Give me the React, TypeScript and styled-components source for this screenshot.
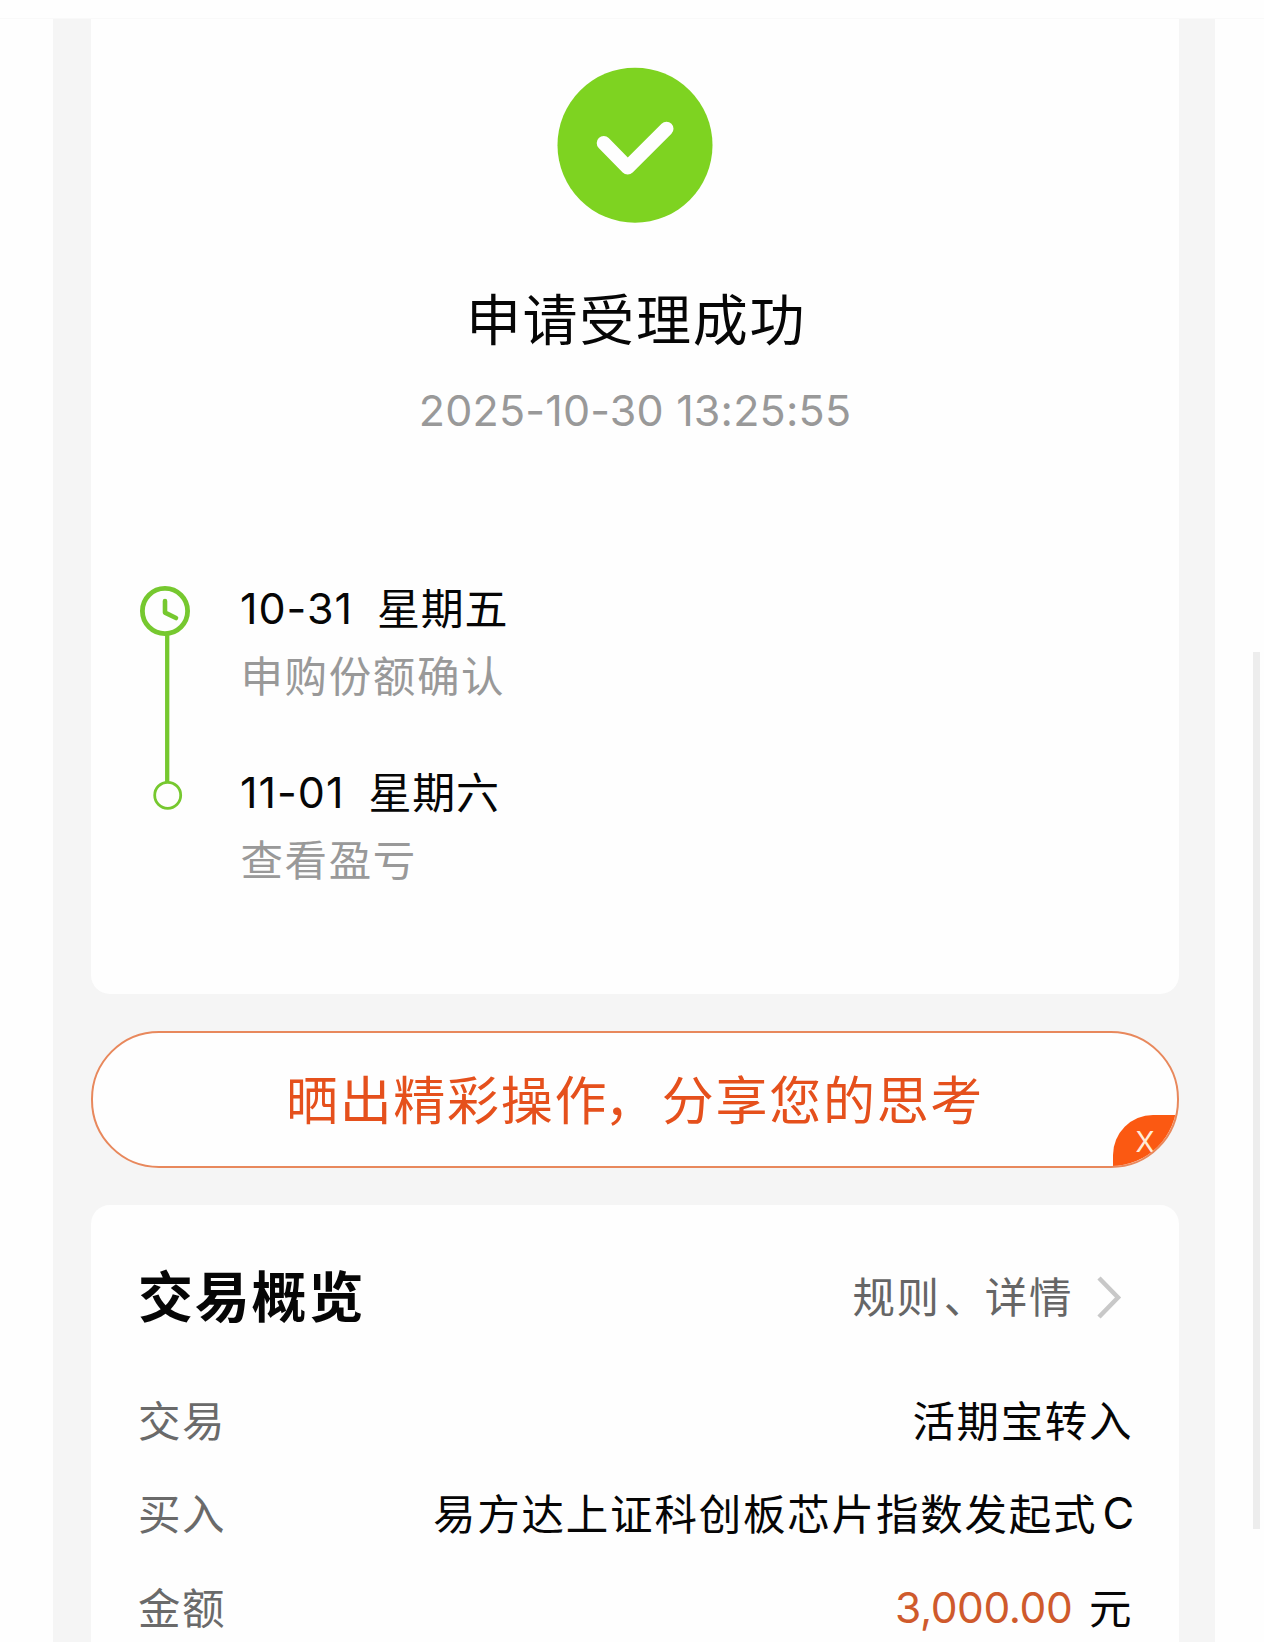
import React from "react";
import styled, { createGlobalStyle } from "styled-components";

const GlobalStyle = createGlobalStyle`
  * { box-sizing: border-box; }
  body {
    margin: 0;
    background: #fefefe;
    font-family: Inter, "Noto Sans CJK SC", sans-serif;
    color: #060606;
  }
`;

const Screen = styled.div`
  display: flex;
  width: 1264px;
  height: 1642px;
  overflow: hidden;
  padding-left: 53px;
  flex-wrap: wrap;
  align-content: flex-start;
`;

const TopRule = styled.div`
  width: 1264px;
  height: 19px;
  margin-left: -53px;
  border-bottom: 1px solid #f9f9f9;
`;

const Panel = styled.main`
  display: flex;
  flex-direction: column;
  gap: 37px;
  width: 1162px;
  height: 1623px;
  padding: 0 36px 0 38px;
  background: #f5f5f5;
  overflow: hidden;
`;

const ScrollTrack = styled.div`
  width: 7px;
  height: 877px;
  margin: 633px 0 0 38px;
  background: #ededed;
`;

const ResultCard = styled.section`
  display: flex;
  flex-direction: column;
  flex: none;
  height: 975px;
  padding: 48px 46px 0 42px;
  background: #fefefe;
  border-radius: 0 0 19px 19px;
`;

const SuccessIcon = styled.svg`
  display: block;
  width: 156px;
  height: 156px;
  margin-left: 424px;
`;

const ResultTitle = styled.h1`
  margin: 57px 0 0 6px;
  font-size: 55px;
  font-weight: 400;
  line-height: 80px;
  letter-spacing: 1.7px;
  text-align: center;
`;

const ResultTime = styled.div`
  margin: 18px 0 0 4px;
  font-size: 43px;
  line-height: 64px;
  letter-spacing: 0.2px;
  text-align: center;
  color: #999;
`;

const Timeline = styled.div`
  display: flex;
  gap: 43px;
  margin-top: 131px;
`;

const Rail = styled.svg`
  width: 64px;
  height: 250px;
  flex: none;
`;

const Steps = styled.div`
  display: flex;
  flex-direction: column;
  gap: 50px;
  margin-top: 3px;
`;

const StepDate = styled.div`
  display: flex;
  gap: 24px;
  height: 67px;
  font-size: 43px;
  line-height: 67px;
`;

const DateDigits = styled.span`
  letter-spacing: 1px;
  line-height: 64px;
`;

const Cjk = styled.span`
  letter-spacing: 0.8px;
`;

const StepNote = styled.div`
  height: 67px;
  padding-left: 0.5px;
  font-size: 42.5px;
  line-height: 67px;
  letter-spacing: 1.6px;
  color: #999;
`;

const ShareButton = styled.div`
  position: relative;
  flex: none;
  height: 137px;
  border: 2px solid #e8885c;
  border-radius: 68px;
  background: #fefefe;
  overflow: hidden;
  font-size: 52px;
  line-height: 137px;
  letter-spacing: 1.7px;
  text-align: center;
  color: #e5501c;
`;

const Punct = styled.span<{ $shift: number }>`
  margin-left: ${(p) => p.$shift}px;
  margin-right: ${(p) => -p.$shift}px;
`;

const CloseBadge = styled.span`
  position: absolute;
  right: -2px;
  bottom: -2px;
  width: 66px;
  height: 53px;
  padding-left: 22.5px;
  border-radius: 40px 0 0 0;
  background: #fb5912;
  color: #ffecd8;
  font-size: 28px;
  line-height: 54px;
  letter-spacing: 0;
  text-align: left;
`;

const OverviewCard = styled.section`
  flex: none;
  height: 460px;
  padding: 55px 46px 0 47px;
  border-radius: 19px 19px 0 0;
  background: #fefefe;
`;

const OverviewHeader = styled.header`
  display: flex;
  align-items: center;
  justify-content: space-between;
  height: 74px;
  margin-bottom: 41px;
`;

const OverviewTitle = styled.h2`
  margin: 0;
  font-size: 55px;
  font-weight: 700;
  line-height: 74px;
  letter-spacing: 1.8px;
`;

const DetailLink = styled.div`
  display: flex;
  align-items: center;
  gap: 22px;
  padding-right: 6px;
  font-size: 42.5px;
  letter-spacing: 1.6px;
  color: #666;
`;

const DetailText = styled.span`
  margin-top: -5px;
`;

const Row = styled.div`
  display: flex;
  justify-content: space-between;
  height: 93.3px;
  font-size: 42.5px;
  line-height: 94px;
  letter-spacing: 1.6px;
`;

const Label = styled.span`
  color: #6a6a6a;
`;

const Value = styled.span`
  display: flex;
  white-space: pre;
`;

const FundName = styled(Value)`
  letter-spacing: 1.8px;
`;

const ShareClass = styled.span`
  margin: 0 -3px 0 5px;
  font-size: 43.5px;
  line-height: 91px;
`;

const Amount = styled.span`
  margin-right: 16.5px;
  color: #cf5a2c;
  line-height: 91px;
  letter-spacing: -0.4px;
`;

const steps = [
  { date: "10-31", day: "星期五", note: "申购份额确认" },
  { date: "11-01", day: "星期六", note: "查看盈亏" },
];

export default function App() {
  return (
    <>
      <GlobalStyle />
      <Screen>
        <TopRule />
        <Panel>
          <ResultCard>
            <SuccessIcon viewBox="0 0 156 156">
              <circle cx="78" cy="78.2" r="77.5" fill="#7ed321" />
              <path d="M46.7 76 L70.7 100.5 L109.5 61.7" fill="none" stroke="#fefefe" strokeWidth="14" strokeLinecap="round" strokeLinejoin="round" />
            </SuccessIcon>
            <ResultTitle>申请受理成功</ResultTitle>
            <ResultTime>2025-10-30 13:25:55</ResultTime>
            <Timeline>
              <Rail viewBox="133 573 64 250" fill="none" stroke="#76c82f">
                <path d="M167.2 634V782" strokeWidth="4.3" />
                <circle cx="165" cy="611" r="22.6" strokeWidth="4.8" />
                <path d="M165 601V612.6L176 618" strokeWidth="4.6" strokeLinecap="round" strokeLinejoin="round" />
                <circle cx="167.7" cy="795.3" r="13" strokeWidth="2.8" />
              </Rail>
              <Steps>
                {steps.map((s) => (
                  <div key={s.date}>
                    <StepDate>
                      <DateDigits>{s.date}</DateDigits>
                      <Cjk>{s.day}</Cjk>
                    </StepDate>
                    <StepNote>{s.note}</StepNote>
                  </div>
                ))}
              </Steps>
            </Timeline>
          </ResultCard>
          <ShareButton>
            晒出精彩操作<Punct $shift={-4}>，</Punct>分享您的思考
            <CloseBadge>X</CloseBadge>
          </ShareButton>
          <OverviewCard>
            <OverviewHeader>
              <OverviewTitle>交易概览</OverviewTitle>
              <DetailLink>
                <DetailText>
                  规则<Punct $shift={3}>、</Punct>详情
                </DetailText>
                <svg width="32" height="44" viewBox="0 0 32 44" fill="none" stroke="#c8c8c8" strokeWidth="4.5">
                  <path d="M4 3L23 22.5L4 42" />
                </svg>
              </DetailLink>
            </OverviewHeader>
            <Row>
              <Label>交易</Label>
              <Value>活期宝转入</Value>
            </Row>
            <Row>
              <Label>买入</Label>
              <FundName>
                易方达上证科创板芯片指数发起式<ShareClass>C</ShareClass>
              </FundName>
            </Row>
            <Row>
              <Label>金额</Label>
              <Value>
                <Amount>3,000.00</Amount>元
              </Value>
            </Row>
          </OverviewCard>
        </Panel>
        <ScrollTrack />
      </Screen>
    </>
  );
}
